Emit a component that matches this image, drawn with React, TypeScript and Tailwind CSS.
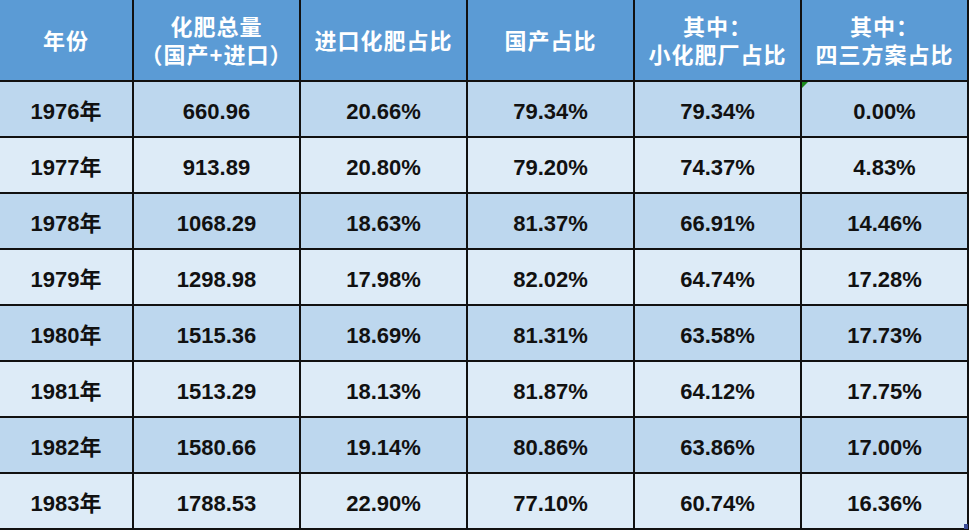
import React from "react";

const rows = [
  ["1976年", "660.96", "20.66%", "79.34%", "79.34%", "0.00%"],
  ["1977年", "913.89", "20.80%", "79.20%", "74.37%", "4.83%"],
  ["1978年", "1068.29", "18.63%", "81.37%", "66.91%", "14.46%"],
  ["1979年", "1298.98", "17.98%", "82.02%", "64.74%", "17.28%"],
  ["1980年", "1515.36", "18.69%", "81.31%", "63.58%", "17.73%"],
  ["1981年", "1513.29", "18.13%", "81.87%", "64.12%", "17.75%"],
  ["1982年", "1580.66", "19.14%", "80.86%", "63.86%", "17.00%"],
  ["1983年", "1788.53", "22.90%", "77.10%", "60.74%", "16.36%"],
];

const headers: string[][] = [
  ["年份"],
  ["化肥总量", "（国产+进口）"],
  ["进口化肥占比"],
  ["国产占比"],
  ["其中：", "小化肥厂占比"],
  ["其中：", "四三方案占比"],
];

export default function App() {
  return (
    <div
      className="relative w-[969px] h-[530px] bg-white"
      style={{ fontFamily: '"Liberation Sans", "Noto Sans CJK SC", sans-serif' }}
    >
      <div className="grid grid-cols-[132px_165px_165px_165px_165px_165px] grid-rows-[80px_repeat(8,54px)] gap-[2px] bg-[#111] pr-[2px] pb-[2px] w-[969px] h-[530px]">
        {headers.map((h, i) => (
          <div
            key={i}
            className="bg-[#5b9bd5] text-white font-bold text-[22px] leading-[28px] flex flex-col items-center justify-center tracking-[1px] pt-[4px]"
          >
            {h.map((l, j) => (
              <span key={j}>{l}</span>
            ))}
          </div>
        ))}
        {rows.map((r, ri) =>
          r.map((c, ci) => (
            <div
              key={ri + "-" + ci}
              className={`${
                ri % 2 === 0 ? "bg-[#bdd7ee]" : "bg-[#ddebf7]"
              } relative text-[#111] font-bold text-[22px] flex items-center justify-center pt-[4px]`}
            >
              {ri === 0 && ci === 5 && (
                <div className="absolute left-0 top-0 w-0 h-0 border-t-[6px] border-t-[#1a8a1a] border-r-[6px] border-r-transparent" />
              )}
              {c}
            </div>
          ))
        )}
      </div>
      <div className="absolute right-[1px] bottom-[1px] w-[4px] h-[5px] bg-[#3b4c96]" />
    </div>
  );
}
